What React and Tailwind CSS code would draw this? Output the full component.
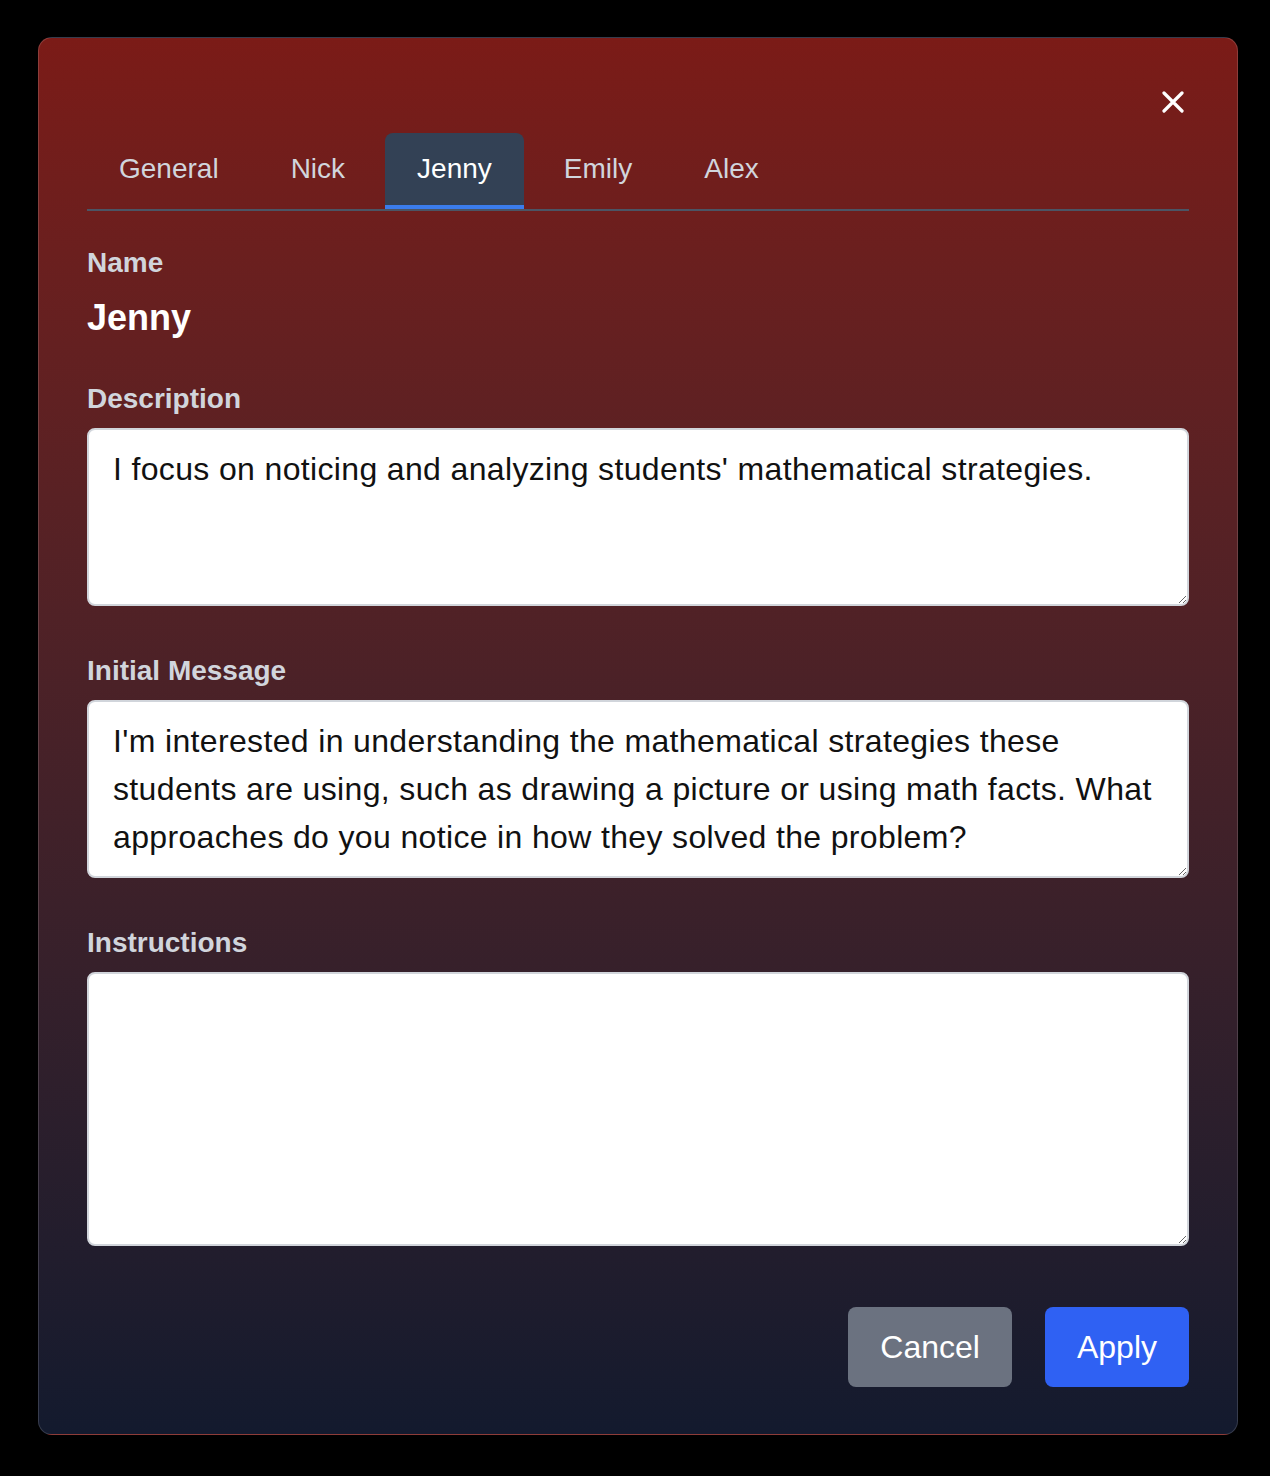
import React, { useState } from "react";

const TABS = ["General", "Nick", "Jenny", "Emily", "Alex"];

const CloseIcon = () => (
  <svg width="22" height="22" viewBox="0 0 22 22" fill="none" stroke="currentColor" strokeWidth="3.2" strokeLinecap="round">
    <path d="M2 2 20 20M20 2 2 20" />
  </svg>
);

const Field = ({ label, value, height, className = "" }) => (
  <div className={className}>
    <label className="block text-[28px] leading-[42px] font-semibold text-gray-300 mb-2">{label}</label>
    <textarea
      defaultValue={value}
      className={`block w-full ${height} rounded-lg border-2 border-[#d1d5db] bg-white px-6 py-[15px] text-[32px] leading-[48px] tracking-[0.35px] text-[#111] focus:outline-none`}
    />
  </div>
);

const App = () => {
  const [active, setActive] = useState("Jenny");

  return (
    <div className="min-h-screen bg-black pt-[37px] pl-[38px] pb-[41px] font-['Liberation_Sans',Arial,sans-serif]">
      <div className="w-[1200px] rounded-[14px] border border-white/15 bg-gradient-to-b from-[#7b1b17] to-[#131a2e] px-12 pt-12 pb-[47px]">
        <div className="flex justify-end">
          <button className="flex h-8 w-8 items-center justify-center text-white">
            <CloseIcon />
          </button>
        </div>

        <div className="mt-[15px] flex gap-2 border-b-2 border-[#4b5565]">
          {TABS.map((t) => (
            <button
              key={t}
              onClick={() => setActive(t)}
              className={`rounded-t-lg border-b-4 px-8 py-4 text-[28px] leading-10 ${
                active === t ? "bg-[#334155] border-[#3b7cec] text-white" : "border-transparent text-gray-300"
              }`}
            >
              {t}
            </button>
          ))}
        </div>

        <div className="mt-[31px]">
          <div className="text-[28px] leading-[42px] font-semibold text-gray-300">Name</div>
          <div className="mt-[14px] text-[36px] leading-10 font-bold text-white">Jenny</div>
        </div>

        <Field
          className="mt-10"
          label="Description"
          height="h-[178px]"
          value="I focus on noticing and analyzing students' mathematical strategies."
        />
        <Field
          className="mt-11"
          label="Initial Message"
          height="h-[178px]"
          value="I'm interested in understanding the mathematical strategies these students are using, such as drawing a picture or using math facts. What approaches do you notice in how they solved the problem?"
        />
        <Field className="mt-11" label="Instructions" height="h-[274px]" value="" />

        <div className="mt-[61px] flex justify-end gap-[33px]">
          <button className="h-20 rounded-lg bg-[#6b7280] px-8 text-[32px] leading-[48px] text-white">Cancel</button>
          <button className="h-20 rounded-lg bg-[#2f61f3] px-8 text-[32px] leading-[48px] text-white">Apply</button>
        </div>
      </div>
    </div>
  );
};

export default App;
